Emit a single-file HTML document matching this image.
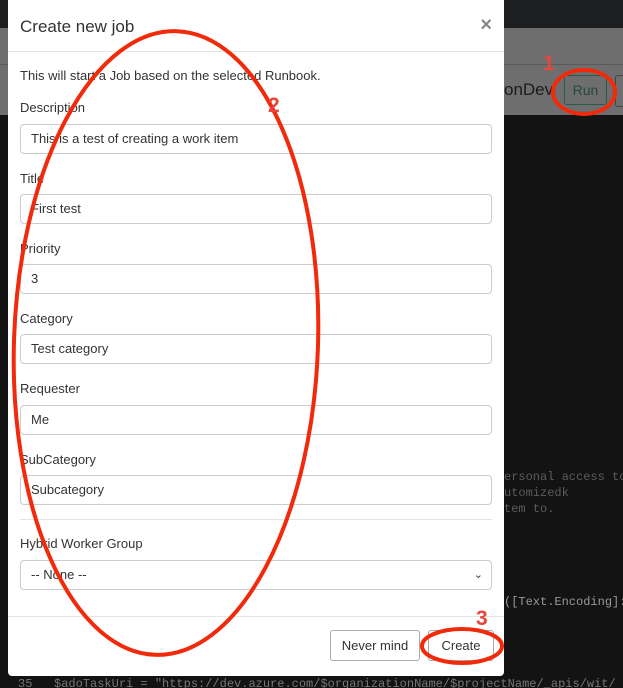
<!DOCTYPE html>
<html><head><style>
html,body{margin:0;width:623px;height:688px;overflow:hidden}
body{background:#131313;font-family:"Liberation Sans",sans-serif;position:relative}
.wrap{position:absolute;left:0;top:0;width:623px;height:688px;overflow:hidden}
.top{position:absolute;left:0;top:0;width:623px;height:28px;background:#1c1e1f}
.gray{position:absolute;left:0;top:28px;width:623px;height:87px;background:#6e6e6e}
.gray .ln{position:absolute;left:0;top:36px;width:623px;height:1px;background:#5a5a5a}
.run{position:absolute;left:564px;top:75px;width:43px;height:30px;border:1px solid #2e5a48;border-radius:3px;box-sizing:border-box;color:#234a3a;font-size:14px;text-align:center;line-height:28px}
.run2{position:absolute;left:615px;top:75px;width:20px;height:30px;border:1px solid #444;border-radius:3px}
.dev{position:absolute;left:504px;top:80px;font-size:17px;color:#1b1b1b}
.code{position:absolute;font-family:"Liberation Mono",monospace;font-size:12px;color:#5c5c5c;white-space:pre}
.modal{position:absolute;left:8px;top:0;width:496px;height:676px;background:#fff;border-radius:0 0 4px 4px}
.hd{height:51px;border-bottom:1px solid #e5e5e5;position:relative}
.hd h4{margin:0;position:absolute;left:12px;top:17px;font-size:17px;font-weight:normal;color:#333}
.x{position:absolute;right:12px;top:14px;font-size:20px;color:#888;font-weight:bold}
.t{position:absolute;left:12px;font-size:13px;color:#333}
.in{position:absolute;left:12px;width:472px;height:30px;border:1px solid #ccc;border-radius:4px;box-sizing:border-box;font-size:13px;color:#333;padding-left:10px;line-height:28px}
.hr{position:absolute;left:12px;width:472px;height:1px;background:#e5e5e5}
.btn{position:absolute;top:630px;height:31px;border:1px solid #aaa;border-radius:3px;box-sizing:border-box;font-size:13px;color:#333;text-align:center;line-height:29px}
</style></head><body><div class="wrap">
<div class="top"></div>
<div class="gray"><div class="ln"></div></div>
<div class="dev">onDev</div>
<div class="run">Run</div><div class="run2"></div>
<div class="code" style="left:504px;top:469px;line-height:16px">ersonal access to
utomizedk
tem to.</div>
<div class="code" style="left:504px;top:595px;color:#999">([Text.Encoding]:</div>
<div class="code" style="left:18px;top:677px;color:#777">35   $adoTaskUri = "https://dev.azure.com/$organizationName/$projectName/_apis/wit/</div>
<div class="modal">
<div class="hd"><h4>Create new job</h4><span class="x">×</span></div>
<div class="t" style="top:68px">This will start a Job based on the selected Runbook.</div>
<div class="t" style="top:100px">Description</div>
<div class="in" style="top:124px">This is a test of creating a work item</div>
<div class="t" style="top:171px">Title</div>
<div class="in" style="top:194px">First test</div>
<div class="t" style="top:241px">Priority</div>
<div class="in" style="top:264px">3</div>
<div class="t" style="top:311px">Category</div>
<div class="in" style="top:334px">Test category</div>
<div class="t" style="top:381px">Requester</div>
<div class="in" style="top:405px">Me</div>
<div class="t" style="top:452px">SubCategory</div>
<div class="in" style="top:475px">Subcategory</div>
<div class="hr" style="top:519px"></div>
<div class="t" style="top:536px">Hybrid Worker Group</div>
<div class="in" style="top:560px">-- None --<span style="position:absolute;right:8px;top:0;font-size:11px">&#8964;</span></div>
<div class="hr" style="top:616px;left:0;width:496px"></div>
<div class="btn" style="left:322px;width:90px">Never mind</div>
<div class="btn" style="left:420px;width:66px">Create</div>
</div>
<svg width="623" height="688" style="position:absolute;left:0;top:0">
<g fill="none" stroke="#f02a0a" stroke-width="4">
<ellipse cx="166" cy="343" rx="152" ry="312" transform="rotate(2 166 343)"/>
<ellipse cx="584" cy="92" rx="31" ry="22"/>
<ellipse cx="462" cy="646" rx="40" ry="17"/>
</g>
<g fill="#e8453c" font-family="Liberation Sans" font-weight="bold" font-size="21">
<text x="268" y="112">2</text><text x="543" y="70">1</text><text x="476" y="625">3</text>
</g>
</svg>
</div></body></html>
